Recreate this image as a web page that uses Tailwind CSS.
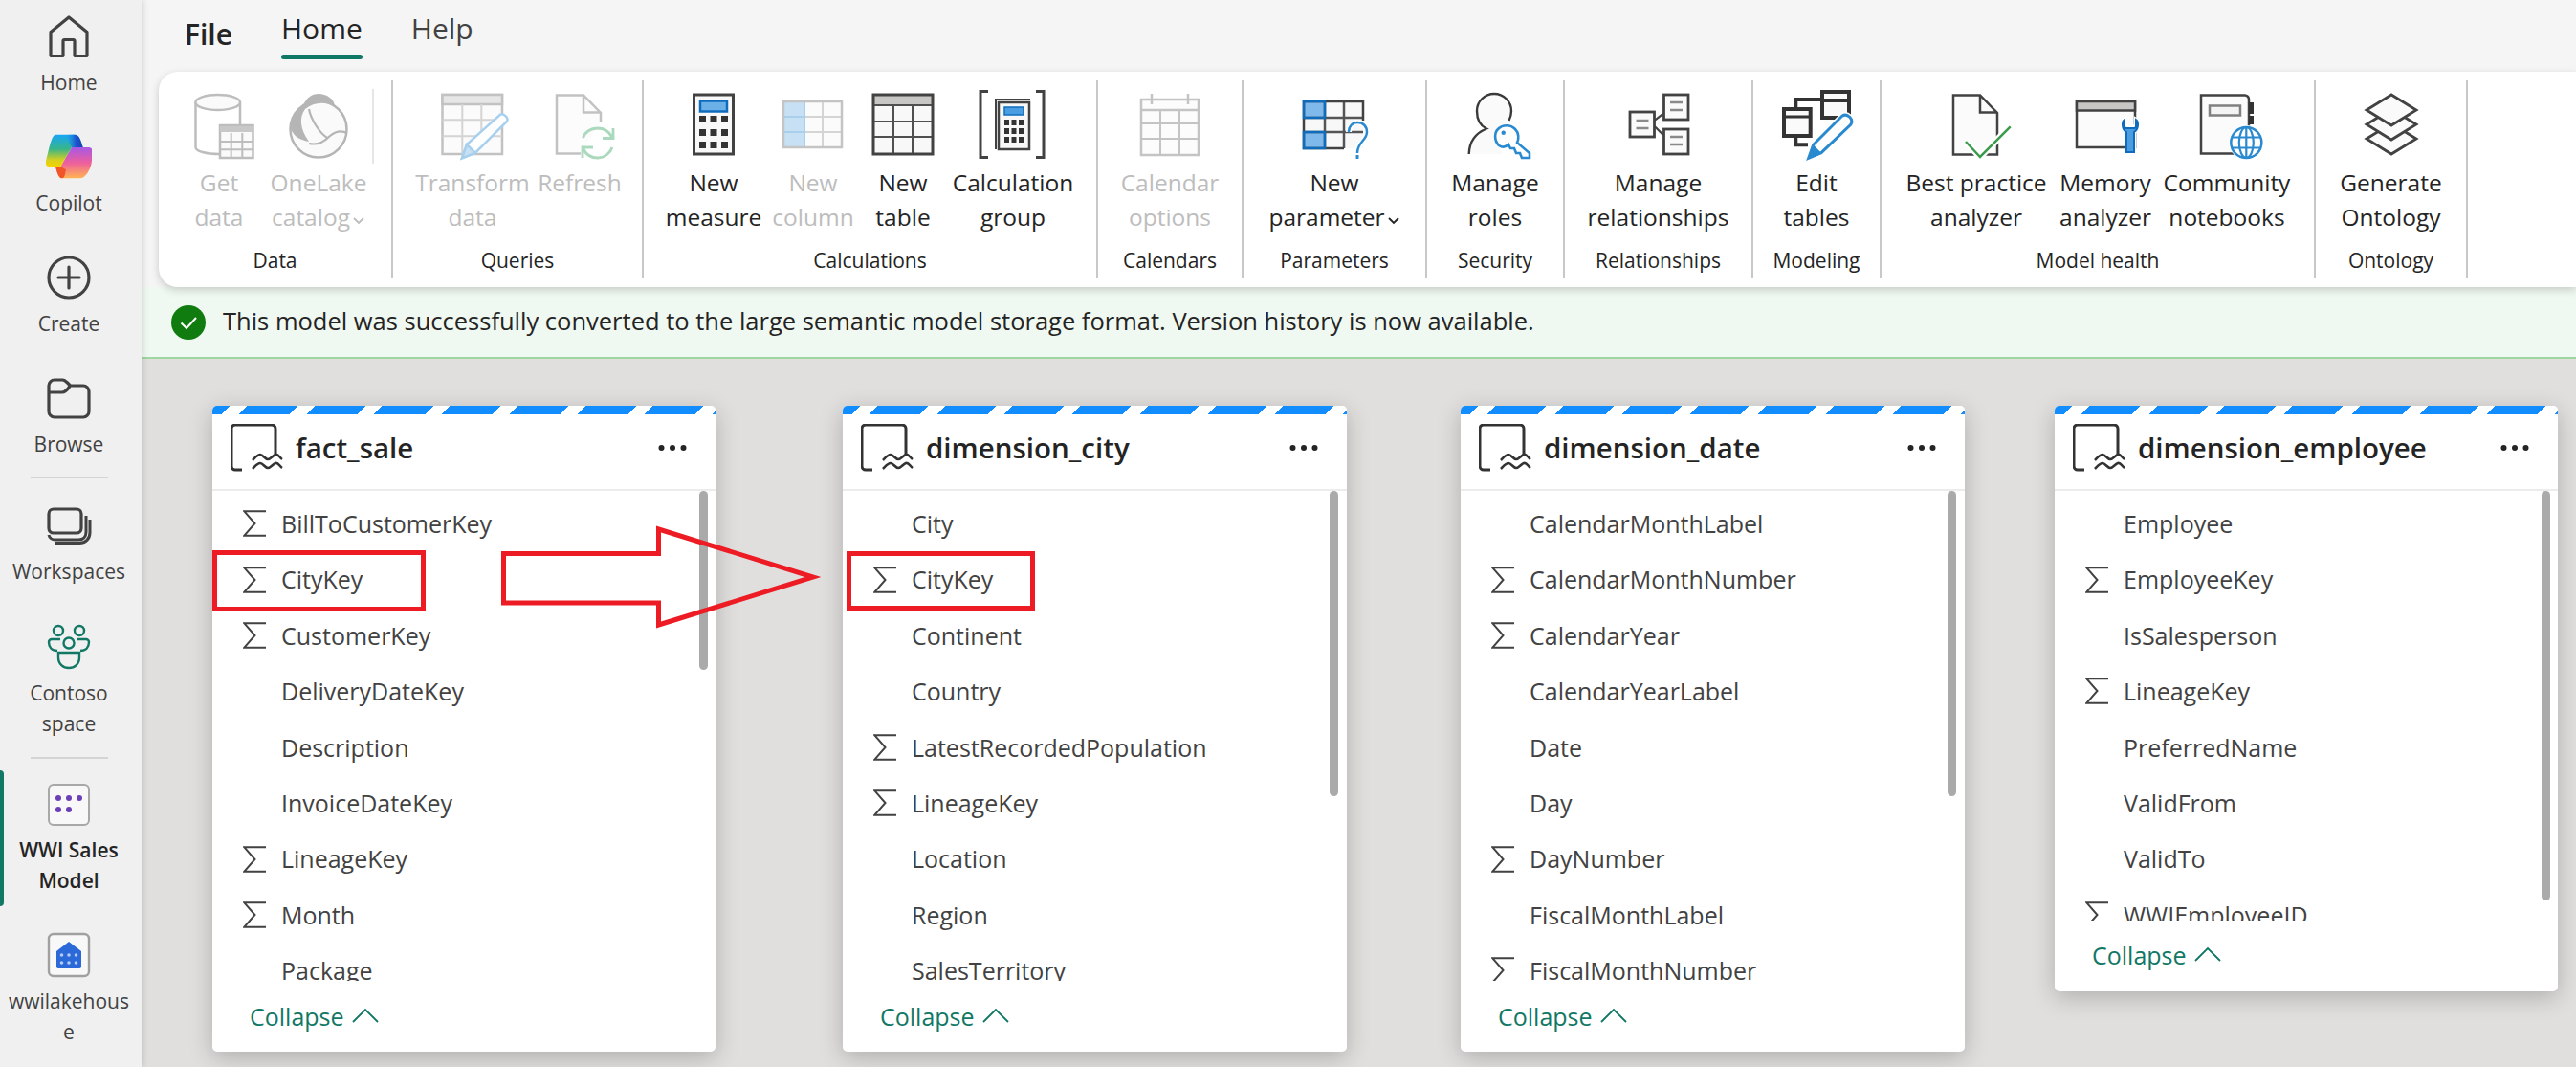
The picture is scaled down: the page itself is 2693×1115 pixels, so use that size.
<!DOCTYPE html>
<html><head><meta charset="utf-8"><script src="https://cdn.jsdelivr.net/npm/@tailwindcss/browser@4"></script></head>
<body class="m-0 w-[2693px] h-[1115px] overflow-hidden bg-[#e0dfdd] font-['Open_Sans',sans-serif]">
<svg width="0" height="0" class="absolute">
<defs>
<linearGradient id="cl" x1="0" y1="0" x2="0" y2="1"><stop offset="0" stop-color="#18a6f5"/><stop offset=".45" stop-color="#37b58a"/><stop offset=".8" stop-color="#d8d01e"/><stop offset="1" stop-color="#f5d300"/></linearGradient>
<linearGradient id="cd" x1="0" y1="0" x2="1" y2="0"><stop offset="0" stop-color="#18a6f5" stop-opacity="0"/><stop offset=".6" stop-color="#1b55d0"/><stop offset="1" stop-color="#1b3fb0"/></linearGradient>
<linearGradient id="cr" x1="0" y1="0" x2="0" y2="1"><stop offset="0" stop-color="#a658e6"/><stop offset=".5" stop-color="#ee5f9c"/><stop offset="1" stop-color="#ffb552"/></linearGradient>
<symbol id="sigma" viewBox="0 0 24 28"><path d="M24 1.2H1.2L12.5 14 1.2 26.8H24" fill="none" stroke="#424242" stroke-width="2"/></symbol>
<symbol id="tbl" viewBox="0 0 55 50"><path d="M12 48H5a4 4 0 0 1-4-4V5a4 4 0 0 1 4-4h38a4 4 0 0 1 4 4v27" fill="none" stroke="#333" stroke-width="3"/><path d="M23 38c3-3 5-6 8-6 3 0 5 5 8 5s5-4 8-5 4 3 7 5M23 47c3-3 5-6 8-6 3 0 5 5 8 5s5-4 8-5 4 3 7 5" fill="none" stroke="#333" stroke-width="2.6"/></symbol>
<symbol id="dots" viewBox="0 0 30 8"><circle cx="3.5" cy="4" r="3" fill="#242424"/><circle cx="15" cy="4" r="3" fill="#242424"/><circle cx="26.5" cy="4" r="3" fill="#242424"/></symbol>
<symbol id="chev" viewBox="0 0 28 16"><path d="M1 15 14 2l13 13" fill="none" stroke="#117865" stroke-width="1.8"/></symbol>
<symbol id="dn" viewBox="0 0 14 10"><path d="M2 2l5 5 5-5" fill="none" stroke="currentColor" stroke-width="1.8"/></symbol>
</defs>
</svg>

<div class="flex w-full h-full">
<!-- Sidebar -->
<aside class="relative w-[148px] h-full shrink-0 pr-[4px] bg-[#f0f0f0] shadow-[2px_0_6px_rgba(0,0,0,0.12)] z-20 flex flex-col items-center text-[21px] leading-[32px] text-[#424242]">
  <div class="absolute left-0 top-[805px] w-[4px] h-[142px] bg-[#117865] rounded-r-sm"></div>
  <div class="mt-[14px] flex flex-col items-center gap-2">
    <svg width="48" height="48" viewBox="0 0 48 48"><path d="M5 43.500V19.500L24 4l19 15.500v24a1 1 0 0 1-1 1H31a1 1 0 0 1-1-1V29a1.500 1.500 0 0 0-1.500-1.500h-9A1.500 1.500 0 0 0 18 29v14.500a1 1 0 0 1-1 1H6a1 1 0 0 1-1-1z" fill="none" stroke="#424242" stroke-width="3.200" stroke-linejoin="round"/></svg>
    <span>Home</span>
  </div>
  <div class="mt-[38px] flex flex-col items-center gap-2">
    <svg width="48" height="48" viewBox="0 0 48 48"><path d="M48 15.700C47.500 14.500 46 14 44 14H27L15.300 34H10c2 6 3 12.300 6 12.300h20c5 0 10-8 11.500-15 1-5 1-13 .5-15.600z" fill="url(#cr)"/><path d="M15.300 34 10 34c1 4 3 12.300 7 12.300 3 0 3-6 4-9z" fill="#f0562a"/><path d="M10.300.7H30c5 0 6.500 6 8.700 13.300H27L15.300 34H3C-1 34-.5 29 .8 25 3 18 5.500.7 10.300.7z" fill="url(#cl)"/><path d="M20 .7h10c5 0 6.500 6 8.700 13.300H27z" fill="url(#cd)"/></svg>
    <span>Copilot</span>
  </div>
  <div class="mt-[38px] flex flex-col items-center gap-2">
    <svg width="48" height="48" viewBox="0 0 48 48"><circle cx="24" cy="24" r="21" fill="none" stroke="#424242" stroke-width="3.200"/><path d="M24 13v22M13 24h22" stroke="#424242" stroke-width="3.200" stroke-linecap="round"/></svg>
    <span>Create</span>
  </div>
  <div class="mt-[38px] flex flex-col items-center gap-2">
    <svg width="48" height="48" viewBox="0 0 48 48"><path d="M3 11a6 6 0 0 1 6-6h8.500c2 0 3.500 1.500 5 3l3 3H39a6 6 0 0 1 6 6v21a6 6 0 0 1-6 6H9a6 6 0 0 1-6-6zM3 18h14c3 0 5-2 8-6.500" fill="none" stroke="#424242" stroke-width="3.200" stroke-linejoin="round"/></svg>
    <span>Browse</span>
  </div>
  <div class="mt-[18px] w-[81px] h-[2px] bg-[#d4d4d4]"></div>
  <div class="mt-[25px] flex flex-col items-center gap-2">
    <svg width="48" height="48" viewBox="0 0 48 48"><rect x="3" y="7" width="34" height="25" rx="5" fill="none" stroke="#424242" stroke-width="3.200"/><path d="M3 34c1 4 4 5 7 5h24c5 0 8-3 8-8V14M9 42.500h26c6 0 11-4 11-11V18" fill="none" stroke="#424242" stroke-width="3"/></svg>
    <span>Workspaces</span>
  </div>
  <div class="mt-[39px] flex flex-col items-center gap-2">
    <svg width="48" height="48" viewBox="0 0 48 48" fill="none" stroke="#117865" stroke-width="2.400"><circle cx="13" cy="7" r="5"/><circle cx="35" cy="7" r="5"/><circle cx="24" cy="20" r="5.500"/><path d="M15 16H6a3 3 0 0 0-3 3c0 5 3 9 9 9M33 16h9a3 3 0 0 1 3 3c0 5-3 9-9 9M13 30h22v5c0 7-5 11-11 11S13 42 13 35z"/></svg>
    <span class="text-center">Contoso<br>space</span>
  </div>
  <div class="mt-[19px] w-[81px] h-[2px] bg-[#d4d4d4]"></div>
  <div class="mt-[24px] flex flex-col items-center gap-2">
    <svg width="48" height="48" viewBox="0 0 48 48"><rect x="3" y="3" width="42" height="42" rx="5" fill="#f8f8f8" stroke="#a8a8a8" stroke-width="2"/><g fill="#6b3fb5"><circle cx="13" cy="17" r="3"/><circle cx="24" cy="17" r="3"/><circle cx="35" cy="17" r="3"/><circle cx="13" cy="29" r="3"/><circle cx="24" cy="29" r="3"/></g></svg>
    <span class="text-center font-semibold text-[#242424] -mt-[1px]">WWI Sales<br>Model</span>
  </div>
  <div class="mt-[38px] flex flex-col items-center gap-2">
    <svg width="48" height="48" viewBox="0 0 48 48"><rect x="3" y="2" width="42" height="44" rx="5" fill="#f8f8f8" stroke="#a0a0a0" stroke-width="2.400"/><path d="M11 20 24 10l13 10v16a2 2 0 0 1-2 2H13a2 2 0 0 1-2-2z" fill="#2b68d8"/><g fill="#b5cdf5"><circle cx="16.500" cy="24" r="1.800"/><circle cx="24" cy="24" r="1.800"/><circle cx="31.500" cy="24" r="1.800"/><circle cx="16.500" cy="32" r="1.800"/><circle cx="24" cy="32" r="1.800"/><circle cx="31.500" cy="32" r="1.800"/></g></svg>
    <span class="text-center">wwilakehous<br>e</span>
  </div>
</aside>

<main class="flex-1 min-w-0 flex flex-col">
  <!-- Tabs -->
  <div class="h-[75px] bg-[#f5f5f5] shrink-0 flex items-start pl-[45px] text-[#242424] text-[30px] leading-[40px]">
    <span class="mt-[16px] font-semibold">File</span>
    <span class="ml-[51px] mt-[10px] flex flex-col font-medium">Home<span class="block h-[5px] mt-[7px] rounded-sm bg-[#117865]"></span></span>
    <span class="ml-[51px] mt-[10px] text-[#424242]">Help</span>
  </div>
  <!-- Ribbon -->
  <div class="relative z-10 h-[225px] shrink-0 bg-[#f5f5f5]">
  <div class="absolute inset-0 left-[18px] bg-white rounded-l-[20px] shadow-[0_3px_8px_rgba(0,0,0,0.18)] py-[9px] flex text-[24.500px] leading-[36px] text-[#242424]">

    <div class="relative flex flex-col w-[245px] h-[207px] border-r-2 border-[#c8c8c8] shrink-0">
      <div class="absolute left-[223px] top-[9px] w-[2px] h-[78px] bg-[#e6e6e6]"></div>
      <div class="flex pl-[20px] text-[#bdbdbd]">
        <div class="flex flex-col items-center w-[86px]">
          <svg class="mt-[8px] mb-[5px]" width="80" height="76" viewBox="0 0 80 76" fill="none" stroke="#bdbdbd" stroke-width="2.500"><path d="M15.500 15v47c0 4 11 7 25 7M62 15v26" /><ellipse cx="38.700" cy="15" rx="23.300" ry="8" fill="#fafafa"/><rect x="41" y="39" width="34.500" height="34" fill="#fafafa"/><path d="M41 43h34.500" stroke-width="6" stroke="#c8c8c8"/><path d="M52.700 47v26M64.300 47v26M41 56h34.500M41 64.300h34.500" stroke-width="2"/></svg>
          <span class="text-center whitespace-nowrap">Get<br>data</span>
        </div>
        <div class="flex flex-col items-center w-[122px]">
          <svg class="mt-[8px] mb-[5px]" width="80" height="76" viewBox="0 0 80 76" fill="none"><circle cx="40" cy="43" r="29.500" fill="#fafafa" stroke="#b5b5b5" stroke-width="2.500"/><path d="M10.300 39C12 28 17 23 23.700 19 27 10 33 6 40 6c8 0 17 5 17 14-9-6-21-6-31 2-6 8-6 20 4 34-10-2-18-6-19.700-17z" fill="#b5b5b5"/><path d="M30 22c2 10 10 24 19 30M30 58c10 2 16-2 22-8 6-5 12-6 18-3" stroke="#b5b5b5" stroke-width="2.200"/></svg>
          <span class="text-center whitespace-nowrap">OneLake<br>catalog<svg class="inline-block ml-[2px] align-baseline" width="14" height="10"><use href="#dn"/></svg></span>
        </div>
      </div>
      <div class="mt-auto mb-[4px] text-center text-[21px] leading-[30px]">Data</div>
    </div>

    <div class="flex flex-col w-[262px] h-[207px] border-r-2 border-[#c8c8c8] shrink-0">
      <div class="flex pl-[23px] text-[#bdbdbd]">
        <div class="flex flex-col items-center w-[120px]">
          <svg class="mt-[8px] mb-[5px]" width="80" height="76" viewBox="0 0 80 76" fill="none" stroke="#c2c2c2" stroke-width="2.500"><path d="M8.500 7h62.500v62H8.500z" fill="#fbfbfb"/><rect x="8.500" y="7" width="62.500" height="10" fill="#e6e6e6"/><path d="M29.300 17v52M49.300 17v44M8.500 33.300h62.500M8.500 50.300h62.500" stroke-width="2" stroke="#d4d4d4"/><path d="M34 59 69 27.700c2-1 4 0 6 2 2 2 2 3 1 5L43 67.700l-14 5.600z" fill="#fff" stroke="#a7d0ee"/><path d="M34 59l9 8.700-14 5.600z" fill="#c7e0f4" stroke="#a7d0ee"/></svg>
          <span class="text-center whitespace-nowrap">Transform<br>data</span>
        </div>
        <div class="flex flex-col items-center w-[104px]">
          <svg class="mt-[8px] mb-[5px]" width="80" height="76" viewBox="0 0 80 76" fill="none"><path d="M41 68.500H16V7.500h28L62 26v10" stroke="#c2c2c2" stroke-width="2.500" fill="#fcfcfc"/><path d="M44 7.500V25.500H62" stroke="#c2c2c2" stroke-width="2.500"/><path d="M43.500 52c2-6 8-10 15-10 7 0 12 3 15 9M74 62c-2 6-8 11-15 11-7 0-12-3-15-9M75 42v10.500H64M43 73V62h11" stroke="#abd9bd" stroke-width="2.800"/></svg>
          <span>Refresh</span>
        </div>
      </div>
      <div class="mt-auto mb-[4px] text-center text-[21px] leading-[30px]">Queries</div>
    </div>

    <div class="flex flex-col w-[475px] h-[207px] border-r-2 border-[#c8c8c8] shrink-0">
      <div class="flex pl-[20px]">
        <div class="flex flex-col items-center w-[106px]">
          <svg class="mt-[8px] mb-[5px]" width="80" height="76" viewBox="0 0 80 76"><rect x="19.500" y="7" width="41" height="62" fill="#f8f8f8" stroke="#424242" stroke-width="3"/><rect x="26" y="13.500" width="28" height="11" fill="#6cb0e8" stroke="#0f6cbd" stroke-width="2.500"/><g fill="#333"><rect x="25" y="29" width="7" height="7"/><rect x="36.500" y="29" width="7" height="7"/><rect x="48" y="29" width="7" height="7"/><rect x="25" y="43" width="7" height="7"/><rect x="36.500" y="43" width="7" height="7"/><rect x="48" y="43" width="7" height="7"/><rect x="25" y="56" width="7" height="7"/><rect x="36.500" y="56" width="7" height="7"/><rect x="48" y="56" width="7" height="7"/></g></svg>
          <span class="text-center whitespace-nowrap">New<br>measure</span>
        </div>
        <div class="flex flex-col items-center w-[102px] text-[#bdbdbd]">
          <svg class="mt-[8px] mb-[5px]" width="80" height="76" viewBox="0 0 80 76" fill="none"><rect x="9" y="14" width="61" height="48" fill="#fbfbfb"/><rect x="9" y="14" width="22" height="48" fill="#c7e0f4"/><path d="M31 14v48M50 14v48M9 30h61M9 46h61" stroke="#d4d4d4" stroke-width="2"/><path d="M9 30h22M9 46h22M31 14v48" stroke="#a8cfec" stroke-width="2"/><rect x="9" y="14" width="61" height="48" stroke="#c4c4c4" stroke-width="2.500"/></svg>
          <span class="text-center whitespace-nowrap">New<br>column</span>
        </div>
        <div class="flex flex-col items-center w-[86px]">
          <svg class="mt-[8px] mb-[5px]" width="80" height="76" viewBox="0 0 80 76" fill="none"><rect x="9" y="7" width="62" height="62" fill="#f8f8f8"/><rect x="9" y="7" width="62" height="10" fill="#c8c6c4"/><path d="M9 18h62M30 18v51M50 18v51M9 35h62M9 51h62" stroke="#505050" stroke-width="2"/><rect x="9" y="7" width="62" height="62" stroke="#424242" stroke-width="3"/></svg>
          <span class="text-center whitespace-nowrap">New<br>table</span>
        </div>
        <div class="flex flex-col items-center w-[144px]">
          <svg class="mt-[8px] mb-[5px]" width="80" height="76" viewBox="0 0 80 76" fill="none"><path d="M14 3.500H6v69h8M64 3.500h8v69h-8" stroke="#424242" stroke-width="3"/><path d="M22 64V12h36" stroke="#424242" stroke-width="2"/><rect x="25" y="15" width="32" height="49" fill="#f8f8f8" stroke="#424242" stroke-width="2.500"/><rect x="31" y="20" width="20" height="8" fill="#4a9de0" stroke="#0f6cbd" stroke-width="1.500"/><g fill="#333"><rect x="31" y="33" width="5" height="6"/><rect x="38.500" y="33" width="5" height="6"/><rect x="46" y="33" width="5" height="6"/><rect x="31" y="42" width="5" height="6"/><rect x="38.500" y="42" width="5" height="6"/><rect x="46" y="42" width="5" height="6"/><rect x="31" y="51" width="5" height="6"/><rect x="38.500" y="51" width="5" height="6"/><rect x="46" y="51" width="5" height="6"/></g></svg>
          <span class="text-center whitespace-nowrap">Calculation<br>group</span>
        </div>
      </div>
      <div class="mt-auto mb-[4px] text-center text-[21px] leading-[30px]">Calculations</div>
    </div>

    <div class="flex flex-col w-[152px] h-[207px] border-r-2 border-[#c8c8c8] shrink-0">
      <div class="flex justify-center text-[#bdbdbd]">
        <div class="flex flex-col items-center">
          <svg class="mt-[8px] mb-[5px]" width="80" height="76" viewBox="0 0 80 76" fill="none" stroke="#c4c4c4" stroke-width="2.500"><rect x="10" y="12" width="60" height="58" fill="#fcfcfc"/><path d="M21 6v11M59 6v11M10 23h60" /><path d="M10 37h60M10 53h60M30 23v47M50 23v47" stroke-width="2"/></svg>
          <span class="text-center whitespace-nowrap">Calendar<br>options</span>
        </div>
      </div>
      <div class="mt-auto mb-[4px] text-center text-[21px] leading-[30px]">Calendars</div>
    </div>

    <div class="flex flex-col w-[192px] h-[207px] border-r-2 border-[#c8c8c8] shrink-0">
      <div class="flex justify-center">
        <div class="flex flex-col items-center">
          <svg class="mt-[8px] mb-[5px]" width="80" height="76" viewBox="0 0 80 76" fill="none"><rect x="8" y="14" width="62" height="49" fill="#f8f8f8"/><rect x="8" y="14" width="22" height="17" fill="#7fb8ea"/><rect x="8" y="46" width="22" height="17" fill="#7fb8ea"/><path d="M30 14v49M50 14v49M8 31h62M8 46h62" stroke="#555" stroke-width="2.500"/><path d="M50 63H8V14h62v20" stroke="#424242" stroke-width="2.500"/><path d="M8 14h22v17H8zM8 46h22v17H8z" stroke="#0f6cbd" stroke-width="2.500"/><path d="M55 46c0-6 4-10 9-10 6 0 10 4 10 10 0 9-10 10-10 22" stroke="#fff" stroke-width="6"/><path d="M55 46c0-6 4-10 9-10 6 0 10 4 10 10 0 9-10 10-10 22" stroke="#2a8ad0" stroke-width="2.500"/><path d="M64 70v4" stroke="#2a8ad0" stroke-width="3"/></svg>
          <span class="text-center whitespace-nowrap">New<br>parameter<svg class="inline-block ml-[2px] align-baseline" width="14" height="10"><use href="#dn"/></svg></span>
        </div>
      </div>
      <div class="mt-auto mb-[4px] text-center text-[21px] leading-[30px]">Parameters</div>
    </div>

    <div class="flex flex-col w-[144px] h-[207px] border-r-2 border-[#c8c8c8] shrink-0">
      <div class="flex justify-center">
        <div class="flex flex-col items-center">
          <svg class="mt-[8px] mb-[5px]" width="80" height="76" viewBox="0 0 80 76" fill="none"><path d="M12.700 69C13 56 20 47 31 42.500 24 39 21 32 21 24c0-10 8-18 18-18s18 8 18 18c0 6-2 11-6 15l-8 20 5 10H12.700z" fill="#fafafa"/><path d="M12.700 69C13 56 20 47 31 42.500 24 39 21 32 21 24c0-10 8-18 18-18s18 8 18 18c0 4-1 7-2.500 10" stroke="#3a3a3a" stroke-width="2.400"/><path d="M44 60C39 55 39 47 43 43c5-5 13-5 18 0 4 4 4 10 2 14L76 68v5h-8l-2-5h-4l-2-5h-4l-2-4c-3 3-7 3-10 1z" fill="#fff" stroke="#2a8ad0" stroke-width="2.600"/><circle cx="48.700" cy="46.700" r="2.200" fill="#2a8ad0"/></svg>
          <span class="text-center whitespace-nowrap">Manage<br>roles</span>
        </div>
      </div>
      <div class="mt-auto mb-[4px] text-center text-[21px] leading-[30px]">Security</div>
    </div>

    <div class="flex flex-col w-[197px] h-[207px] border-r-2 border-[#c8c8c8] shrink-0">
      <div class="flex justify-center">
        <div class="flex flex-col items-center">
          <svg class="mt-[8px] mb-[5px]" width="80" height="76" viewBox="0 0 80 76" fill="none"><path d="M35 34.300 45 26.700M35 39.300 45 49.300" stroke="#424242" stroke-width="2.200"/><rect x="10" y="25" width="25.500" height="26" fill="#fafafa" stroke="#424242" stroke-width="2.800"/><rect x="45.500" y="7" width="25.500" height="26" fill="#fafafa" stroke="#424242" stroke-width="2.800"/><rect x="45.500" y="43" width="25.500" height="26" fill="#fafafa" stroke="#424242" stroke-width="2.800"/><path d="M16.500 34h13M16.500 42h13M52 15h13M52 23h13M52 51h13M52 59h13" stroke="#8a8a8a" stroke-width="2.400"/></svg>
          <span class="text-center whitespace-nowrap">Manage<br>relationships</span>
        </div>
      </div>
      <div class="mt-auto mb-[4px] text-center text-[21px] leading-[30px]">Relationships</div>
    </div>

    <div class="flex flex-col w-[134px] h-[207px] border-r-2 border-[#c8c8c8] shrink-0">
      <div class="flex justify-center">
        <div class="flex flex-col items-center">
          <svg class="mt-[8px] mb-[5px]" width="80" height="76" viewBox="0 0 80 76" fill="none"><path d="M18.300 22v-10H46M18.300 50v9.300H31" stroke="#333" stroke-width="4"/><rect x="6" y="22" width="27.700" height="28" fill="#fafafa" stroke="#333" stroke-width="4"/><path d="M6 30h27.700" stroke="#333" stroke-width="3"/><rect x="46" y="4" width="28" height="27" fill="#fafafa" stroke="#333" stroke-width="4"/><path d="M46 13h28" stroke="#333" stroke-width="4"/><path d="M36.700 59.300 66.700 29.300c3-2 6-1 8 1s3 5 1 8L45 67.700l-13.300 5.600z" fill="#fff" stroke="#fff" stroke-width="6"/><path d="M36.700 59.300 66.700 29.300c3-2 6-1 8 1s3 5 1 8L45 67.700l-13.300 5.600z" fill="#fff" stroke="#2a8ad0" stroke-width="3"/><path d="M36.700 59.300l8.300 8.400-13.300 5.600z" fill="#2a8ad0"/></svg>
          <span class="text-center whitespace-nowrap">Edit<br>tables</span>
        </div>
      </div>
      <div class="mt-auto mb-[4px] text-center text-[21px] leading-[30px]">Modeling</div>
    </div>

    <div class="flex flex-col w-[454px] h-[207px] border-r-2 border-[#c8c8c8] shrink-0">
      <div class="flex pl-[21px]">
        <div class="flex flex-col items-center w-[156px]">
          <svg class="mt-[8px] mb-[5px]" width="80" height="76" viewBox="0 0 80 76" fill="none"><path d="M16 7.500h28L62 26v43.500H16z" fill="#fbfbfb" stroke="#424242" stroke-width="2.500"/><path d="M44 7.500V25.500H62" stroke="#424242" stroke-width="2.500"/><path d="M29 56l15 16 31.700-31.700" stroke="#fff" stroke-width="7"/><path d="M29 56l15 16 31.700-31.700" stroke="#3a9b4c" stroke-width="2.500"/></svg>
          <span class="text-center whitespace-nowrap">Best practice<br>analyzer</span>
        </div>
        <div class="flex flex-col items-center w-[114px]">
          <svg class="mt-[8px] mb-[5px]" width="80" height="76" viewBox="0 0 80 76" fill="none"><rect x="10" y="14" width="61" height="48" fill="#fbfbfb" stroke="#424242" stroke-width="2.500"/><rect x="10" y="14" width="61" height="9.500" fill="#c8c6c4" stroke="#424242" stroke-width="2.500"/><path d="M60 33c-3 2-3 10 2 13v21h8V46c5-3 5-11 2-13v7h-12z" fill="#fff" stroke="#fff" stroke-width="4"/><path d="M60 33c-3 2-3 10 2 13v21h8V46c5-3 5-11 2-13v7c0 2-1 2-2 2h-8c-1 0-2 0-2-2z" fill="#4a9de0" stroke="#0f6cbd" stroke-width="2"/></svg>
          <span class="text-center whitespace-nowrap">Memory<br>analyzer</span>
        </div>
        <div class="flex flex-col items-center w-[140px]">
          <svg class="mt-[8px] mb-[5px]" width="80" height="76" viewBox="0 0 80 76" fill="none"><path d="M13 7.500h46c2 0 4 2 4 4V42H50v27.500H13z" fill="#fbfbfb"/><path d="M48 68.500H13V7.500h46c2 0 4 2 4 4v30" stroke="#424242" stroke-width="2.500"/><rect x="22" y="18.500" width="32" height="10" fill="#f4f4f4" stroke="#808080" stroke-width="2.500"/><path d="M65.500 15v12M65.500 29v9" stroke="#333" stroke-width="5"/><circle cx="60.300" cy="57" r="18" fill="#fff"/><circle cx="60.300" cy="57" r="16" stroke="#2a8ad0" stroke-width="2.500"/><ellipse cx="60.300" cy="57" rx="7.500" ry="16" stroke="#2a8ad0" stroke-width="2.200"/><path d="M45.500 51.500h30M45.500 62.500h30M60.300 41v32" stroke="#2a8ad0" stroke-width="2.200"/></svg>
          <span class="text-center whitespace-nowrap">Community<br>notebooks</span>
        </div>
      </div>
      <div class="mt-auto mb-[4px] text-center text-[21px] leading-[30px]">Model health</div>
    </div>

    <div class="flex flex-col w-[159px] h-[207px] border-r-2 border-[#c8c8c8] shrink-0">
      <div class="flex justify-center">
        <div class="flex flex-col items-center">
          <svg class="mt-[8px] mb-[5px]" width="80" height="76" viewBox="0 0 80 76" fill="#fafafa" stroke="#424242" stroke-width="2.800" stroke-linejoin="miter"><path d="M41 37 15 53l26 16 26-16z"/><path d="M41 22 15 38l26 16 26-16z"/><path d="M41 7 15 23l26 16 26-16z"/></svg>
          <span class="text-center whitespace-nowrap">Generate<br>Ontology</span>
        </div>
      </div>
      <div class="mt-auto mb-[4px] text-center text-[21px] leading-[30px]">Ontology</div>
    </div>
  </div>
  </div>

  <!-- Banner -->
  <div class="h-[75px] shrink-0 bg-[#f0f9f1] border-b-2 border-[#9fd89f] flex items-center pl-[31px] text-[25.500px] text-[#242424]">
    <svg width="36" height="36" viewBox="0 0 36 36"><circle cx="18" cy="18" r="18" fill="#107c10"/><path d="M10.500 18.500l5.500 5.500 10-11" fill="none" stroke="#fff" stroke-width="2"/></svg>
    <span class="ml-[18px] mb-[2px]">This model was successfully converted to the large semantic model storage format. Version history is now available.</span>
  </div>

  <!-- Canvas -->
  <div class="relative flex-1 min-h-0 bg-[#e0dfdd] text-[25px] text-[#424242]">

    <!-- Card fact_sale -->
    <section class="absolute left-[74px] top-[49px] w-[526px] h-[675px] bg-white rounded-[5px] overflow-hidden shadow-[0_6px_24px_rgba(0,0,0,0.22)] flex flex-col">
      <div class="h-[9px] shrink-0 bg-[repeating-linear-gradient(135deg,#118dff_0,#118dff_13.400px,#fff_13.400px,#fff_25.800px,#118dff_25.800px,#118dff_50px)]"></div>
      <header class="h-[80px] shrink-0 flex items-center pl-[19px] pr-[30px] pb-[8px] border-b-2 border-[#ececec] text-[#242424] text-[29.500px] font-semibold">
        <svg width="55" height="50"><use href="#tbl"/></svg><span class="ml-[13px] flex-1">fact_sale</span><svg width="30" height="8"><use href="#dots"/></svg>
      </header>
      <div class="relative h-[512px] shrink-0 overflow-hidden pt-[5px] leading-[58.400px]">
        <div class="absolute right-[8px] top-0 w-[9px] h-[187px] rounded-full bg-[#aaaaaa]"></div>
        <div class="flex items-center h-[58.400px]"><svg class="ml-[32px]" width="24" height="28"><use href="#sigma"/></svg><span class="ml-[16px]">BillToCustomerKey</span></div>
        <div class="flex items-center h-[58.400px]"><svg class="ml-[32px]" width="24" height="28"><use href="#sigma"/></svg><span class="ml-[16px]">CityKey</span></div>
        <div class="flex items-center h-[58.400px]"><svg class="ml-[32px]" width="24" height="28"><use href="#sigma"/></svg><span class="ml-[16px]">CustomerKey</span></div>
        <div class="flex items-center h-[58.400px] pl-[72px]">DeliveryDateKey</div>
        <div class="flex items-center h-[58.400px] pl-[72px]">Description</div>
        <div class="flex items-center h-[58.400px] pl-[72px]">InvoiceDateKey</div>
        <div class="flex items-center h-[58.400px]"><svg class="ml-[32px]" width="24" height="28"><use href="#sigma"/></svg><span class="ml-[16px]">LineageKey</span></div>
        <div class="flex items-center h-[58.400px]"><svg class="ml-[32px]" width="24" height="28"><use href="#sigma"/></svg><span class="ml-[16px]">Month</span></div>
        <div class="flex items-center h-[58.400px] pl-[72px]">Package</div>
      </div>
      <div class="h-[72px] shrink-0 flex items-center pl-[39px] pt-[3px] text-[#117865]">Collapse<svg class="ml-[8px] mb-[4px]" width="28" height="16"><use href="#chev"/></svg></div>
    </section>

    <!-- Card dimension_city -->
    <section class="absolute left-[733px] top-[49px] w-[527px] h-[675px] bg-white rounded-[5px] overflow-hidden shadow-[0_6px_24px_rgba(0,0,0,0.22)] flex flex-col">
      <div class="h-[9px] shrink-0 bg-[repeating-linear-gradient(135deg,#118dff_0,#118dff_13.400px,#fff_13.400px,#fff_25.800px,#118dff_25.800px,#118dff_50px)]"></div>
      <header class="h-[80px] shrink-0 flex items-center pl-[19px] pr-[30px] pb-[8px] border-b-2 border-[#ececec] text-[#242424] text-[29.500px] font-semibold">
        <svg width="55" height="50"><use href="#tbl"/></svg><span class="ml-[13px] flex-1">dimension_city</span><svg width="30" height="8"><use href="#dots"/></svg>
      </header>
      <div class="relative h-[512px] shrink-0 overflow-hidden pt-[5px] leading-[58.400px]">
        <div class="absolute right-[9px] top-0 w-[9px] h-[319px] rounded-full bg-[#aaaaaa]"></div>
        <div class="flex items-center h-[58.400px] pl-[72px]">City</div>
        <div class="flex items-center h-[58.400px]"><svg class="ml-[32px]" width="24" height="28"><use href="#sigma"/></svg><span class="ml-[16px]">CityKey</span></div>
        <div class="flex items-center h-[58.400px] pl-[72px]">Continent</div>
        <div class="flex items-center h-[58.400px] pl-[72px]">Country</div>
        <div class="flex items-center h-[58.400px]"><svg class="ml-[32px]" width="24" height="28"><use href="#sigma"/></svg><span class="ml-[16px]">LatestRecordedPopulation</span></div>
        <div class="flex items-center h-[58.400px]"><svg class="ml-[32px]" width="24" height="28"><use href="#sigma"/></svg><span class="ml-[16px]">LineageKey</span></div>
        <div class="flex items-center h-[58.400px] pl-[72px]">Location</div>
        <div class="flex items-center h-[58.400px] pl-[72px]">Region</div>
        <div class="flex items-center h-[58.400px] pl-[72px]">SalesTerritory</div>
      </div>
      <div class="h-[72px] shrink-0 flex items-center pl-[39px] pt-[3px] text-[#117865]">Collapse<svg class="ml-[8px] mb-[4px]" width="28" height="16"><use href="#chev"/></svg></div>
    </section>

    <!-- Card dimension_date -->
    <section class="absolute left-[1379px] top-[49px] w-[527px] h-[675px] bg-white rounded-[5px] overflow-hidden shadow-[0_6px_24px_rgba(0,0,0,0.22)] flex flex-col">
      <div class="h-[9px] shrink-0 bg-[repeating-linear-gradient(135deg,#118dff_0,#118dff_13.400px,#fff_13.400px,#fff_25.800px,#118dff_25.800px,#118dff_50px)]"></div>
      <header class="h-[80px] shrink-0 flex items-center pl-[19px] pr-[30px] pb-[8px] border-b-2 border-[#ececec] text-[#242424] text-[29.500px] font-semibold">
        <svg width="55" height="50"><use href="#tbl"/></svg><span class="ml-[13px] flex-1">dimension_date</span><svg width="30" height="8"><use href="#dots"/></svg>
      </header>
      <div class="relative h-[512px] shrink-0 overflow-hidden pt-[5px] leading-[58.400px]">
        <div class="absolute right-[9px] top-0 w-[9px] h-[319px] rounded-full bg-[#aaaaaa]"></div>
        <div class="flex items-center h-[58.400px] pl-[72px]">CalendarMonthLabel</div>
        <div class="flex items-center h-[58.400px]"><svg class="ml-[32px]" width="24" height="28"><use href="#sigma"/></svg><span class="ml-[16px]">CalendarMonthNumber</span></div>
        <div class="flex items-center h-[58.400px]"><svg class="ml-[32px]" width="24" height="28"><use href="#sigma"/></svg><span class="ml-[16px]">CalendarYear</span></div>
        <div class="flex items-center h-[58.400px] pl-[72px]">CalendarYearLabel</div>
        <div class="flex items-center h-[58.400px] pl-[72px]">Date</div>
        <div class="flex items-center h-[58.400px] pl-[72px]">Day</div>
        <div class="flex items-center h-[58.400px]"><svg class="ml-[32px]" width="24" height="28"><use href="#sigma"/></svg><span class="ml-[16px]">DayNumber</span></div>
        <div class="flex items-center h-[58.400px] pl-[72px]">FiscalMonthLabel</div>
        <div class="flex items-center h-[58.400px]"><svg class="ml-[32px]" width="24" height="28"><use href="#sigma"/></svg><span class="ml-[16px]">FiscalMonthNumber</span></div>
      </div>
      <div class="h-[72px] shrink-0 flex items-center pl-[39px] pt-[3px] text-[#117865]">Collapse<svg class="ml-[8px] mb-[4px]" width="28" height="16"><use href="#chev"/></svg></div>
    </section>

    <!-- Card dimension_employee -->
    <section class="absolute left-[2000px] top-[49px] w-[526px] h-[612px] bg-white rounded-[5px] overflow-hidden shadow-[0_6px_24px_rgba(0,0,0,0.22)] flex flex-col">
      <div class="h-[9px] shrink-0 bg-[repeating-linear-gradient(135deg,#118dff_0,#118dff_13.400px,#fff_13.400px,#fff_25.800px,#118dff_25.800px,#118dff_50px)]"></div>
      <header class="h-[80px] shrink-0 flex items-center pl-[19px] pr-[30px] pb-[8px] border-b-2 border-[#ececec] text-[#242424] text-[29.500px] font-semibold">
        <svg width="55" height="50"><use href="#tbl"/></svg><span class="ml-[13px] flex-1">dimension_employee</span><svg width="30" height="8"><use href="#dots"/></svg>
      </header>
      <div class="relative h-[449px] shrink-0 overflow-hidden pt-[5px] leading-[58.400px]">
        <div class="absolute right-[8px] top-0 w-[9px] h-[428px] rounded-full bg-[#aaaaaa]"></div>
        <div class="flex items-center h-[58.400px] pl-[72px]">Employee</div>
        <div class="flex items-center h-[58.400px]"><svg class="ml-[32px]" width="24" height="28"><use href="#sigma"/></svg><span class="ml-[16px]">EmployeeKey</span></div>
        <div class="flex items-center h-[58.400px] pl-[72px]">IsSalesperson</div>
        <div class="flex items-center h-[58.400px]"><svg class="ml-[32px]" width="24" height="28"><use href="#sigma"/></svg><span class="ml-[16px]">LineageKey</span></div>
        <div class="flex items-center h-[58.400px] pl-[72px]">PreferredName</div>
        <div class="flex items-center h-[58.400px] pl-[72px]">ValidFrom</div>
        <div class="flex items-center h-[58.400px] pl-[72px]">ValidTo</div>
        <div class="flex items-center h-[58.400px]"><svg class="ml-[32px]" width="24" height="28"><use href="#sigma"/></svg><span class="ml-[16px]">WWIEmployeeID</span></div>
      </div>
      <div class="h-[71px] shrink-0 flex items-center pl-[39px] pt-[2px] text-[#117865]">Collapse<svg class="ml-[8px] mb-[4px]" width="28" height="16"><use href="#chev"/></svg></div>
    </section>

    <!-- Annotations -->
    <div class="absolute left-[74px] top-[200px] w-[223px] h-[64px] border-[5px] border-[#ed1c24]"></div>
    <div class="absolute left-[737px] top-[201px] w-[197px] h-[62px] border-[5px] border-[#ed1c24]"></div>
    <svg class="absolute left-[370px] top-[170px]" width="500" height="120" viewBox="0 0 500 120" fill="none"><path d="M8.500 33.500H170.500V8L332 58 170.500 108V85H8.500z" stroke="#ed1c24" stroke-width="5"/></svg>
  </div>
</main>
</div>
</body></html>
